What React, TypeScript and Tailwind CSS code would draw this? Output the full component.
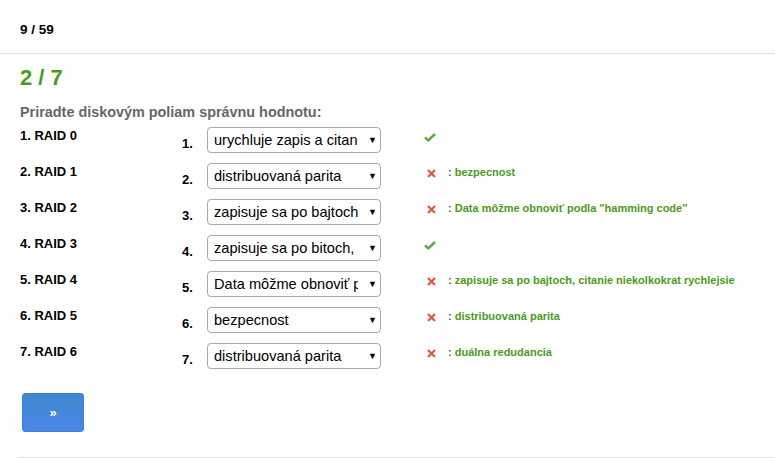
import React from 'react';

interface Row {
  label: string;
  value: string;
  ok: boolean;
  note?: string;
}

const rows: Row[] = [
  { label: 'RAID 0', value: 'urychluje zapis a citanie', ok: true },
  { label: 'RAID 1', value: 'distribuovaná parita', ok: false, note: 'bezpecnost' },
  { label: 'RAID 2', value: 'zapisuje sa po bajtoch, citanie', ok: false, note: 'Data môžme obnoviť podla "hamming code"' },
  { label: 'RAID 3', value: 'zapisuje sa po bitoch, citanie', ok: true },
  { label: 'RAID 4', value: 'Data môžme obnoviť podla "hamming code"', ok: false, note: 'zapisuje sa po bajtoch, citanie niekolkokrat rychlejsie' },
  { label: 'RAID 5', value: 'bezpecnost', ok: false, note: 'distribuovaná parita' },
  { label: 'RAID 6', value: 'distribuovaná parita', ok: false, note: 'duálna redudancia' },
];

function CheckIcon() {
  return (
    <svg width="12" height="9" viewBox="0 0 12 9">
      <path d="M1 4.4 L4.3 7.4 L11 1" fill="none" stroke="#5cac45" strokeWidth="2.5" />
    </svg>
  );
}

function CrossIcon() {
  return (
    <svg width="9" height="9" viewBox="0 0 9 9">
      <path d="M1 1 L8 8 M8 1 L1 8" fill="none" stroke="#e8573a" strokeWidth="2.3" />
    </svg>
  );
}

export default function App() {
  return (
    <div className="w-[775px] h-[459px] bg-white overflow-hidden font-['Liberation_Sans',Arial,sans-serif] text-black">
      <div className="h-[54px] border-b border-[#e2e2e2] pl-5 pt-[22px]">
        <div className="text-[13.5px] font-bold leading-[16px]">9 / 59</div>
      </div>
      <div className="pl-5">
        <div className="text-[22px] font-bold text-[#4b9a1e] leading-[26px] mt-[11px]">2 / 7</div>
        <div className="text-[14.4px] font-bold text-[#666] leading-[16px] mt-[13px]">Priradte diskovým poliam správnu hodnotu:</div>
        <div className="mt-[6px]">
          {rows.map((r, i) => (
            <div key={i} className="flex h-[36px]">
              <div className="w-[162px] text-[13px] font-bold leading-[16px] pt-[2px]">
                {i + 1}. {r.label}
              </div>
              <div className="flex items-start mt-[1px]">
                <span className="w-[25px] text-[13px] font-bold leading-[16px] pt-[9px]">{i + 1}.</span>
                <div className="flex items-center w-[174px] h-[26px] border border-[#aaa] rounded-[4px] bg-white pl-[6px]">
                  <div className="w-[144px] overflow-hidden whitespace-nowrap text-[14.6px] leading-[24px] text-black">
                    {r.value}
                  </div>
                  <span className="ml-[10px] text-[9px] leading-[10px]">▼</span>
                </div>
                <div className="w-[55px] pt-[6px] flex justify-end">
                  {r.ok ? <CheckIcon /> : <CrossIcon />}
                </div>
                {r.note && (
                  <span className="ml-[12px] pt-[2px] text-[11px] font-bold text-[#4b9a1e] leading-[14px] whitespace-nowrap">
                    <span className="text-[#557]">:</span> {r.note}
                  </span>
                )}
              </div>
            </div>
          ))}
        </div>
        <button className="mt-[15px] ml-[2px] w-[62px] h-[39px] rounded-[3px] border border-[#3a80d8] bg-gradient-to-b from-[#3f88cf] to-[#4a86e8] text-white text-[13px] font-bold">
          »
        </button>
      </div>
      <div className="ml-[18px] mt-[25px] border-t border-[#e6e6e6]"></div>
    </div>
  );
}
